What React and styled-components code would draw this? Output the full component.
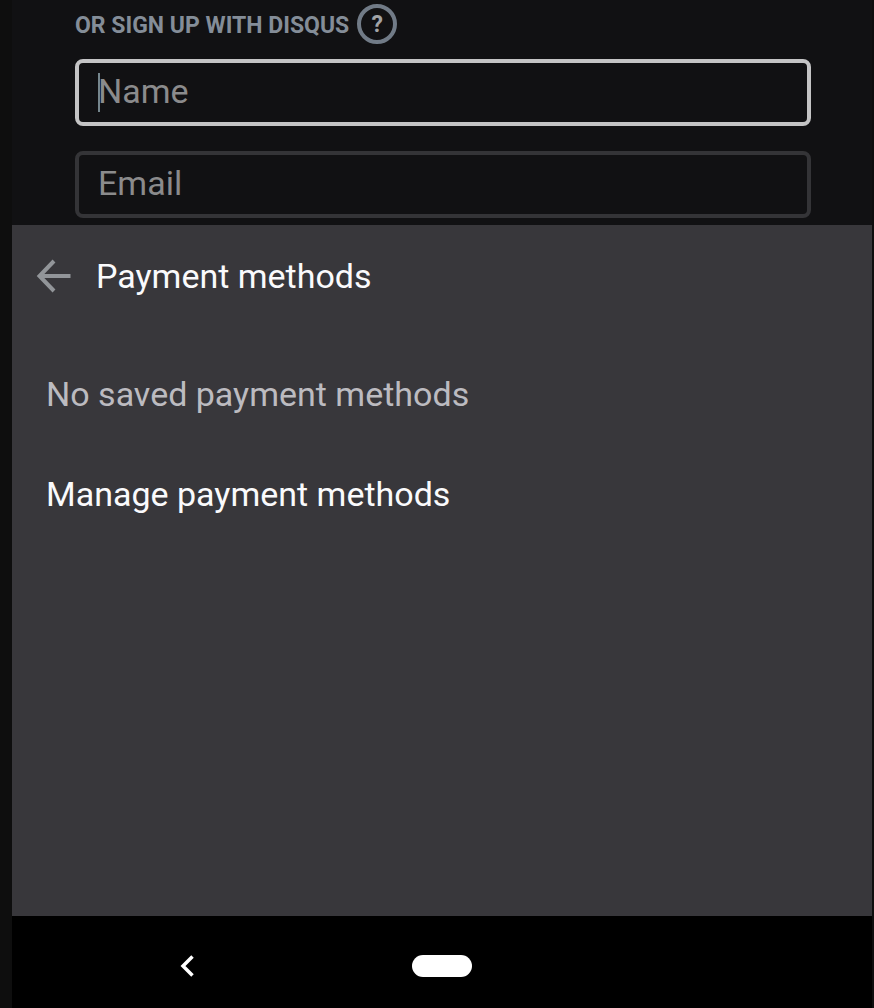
import React from "react";
import styled, { createGlobalStyle } from "styled-components";

const GlobalStyle = createGlobalStyle`
  * {
    box-sizing: border-box;
  }
  body {
    margin: 0;
    background: #0e0e0e;
    font-family: Roboto, "Liberation Sans", sans-serif;
  }
`;

const Button = styled.button`
  border: none;
  padding: 0;
  background: none;
  color: inherit;
  font: inherit;
  cursor: pointer;
`;

const Screen = styled.div`
  min-height: 100vh;
  margin: 0 2px 0 12px;
  display: flex;
  flex-direction: column;
  background: #111113;
`;

const SignUp = styled.form`
  padding: 4px 61px 7px 63px;
`;
const SignUpHeader = styled.div`
  display: flex;
  align-items: center;
  gap: 8px;
  height: 40px;
  margin-bottom: 15px;
`;
const SignUpTitle = styled.h2`
  margin: 0;
  padding-top: 4px;
  color: #848d98;
  font-size: 23px;
  font-weight: 700;
  line-height: 28px;
`;
const HelpButton = styled(Button)`
  width: 40px;
  height: 40px;
  padding-top: 2px;
  border: 4px solid #717b87;
  border-radius: 50%;
  color: #a2a4a7;
  font-size: 23px;
  font-weight: 700;
  line-height: 28px;
`;

const Field = styled.label`
  display: block;
  position: relative;

  & + & {
    margin-top: 25px;
  }
`;
const Input = styled.input`
  display: block;
  width: 100%;
  height: 67px;
  padding: 0 19px 4px;
  border: 4px solid ${(props) => (props.$active ? "#c4c4c5" : "#343437")};
  border-radius: 8px;
  outline: none;
  background: #111113;
  color: #c4c4c5;
  font-family: inherit;
  font-size: 34px;

  &::placeholder {
    color: #8b8b8c;
    opacity: 1;
  }
`;
const Caret = styled.span`
  position: absolute;
  top: 14px;
  left: 23px;
  width: 2px;
  height: 39px;
  background: #75868d;
`;

const Sheet = styled.section`
  flex: 1;
  background: #38373b;
  color: #fafafc;
  font-size: 34px;
  line-height: 40px;
`;
const SheetHeader = styled.header`
  display: flex;
  align-items: center;
  gap: 24px;
  padding: 31px 24px;
  margin-bottom: 17px;
`;
const BackButton = styled(Button)`
  display: flex;
  color: #929599;
`;
const SheetTitle = styled.h1`
  margin: 0;
  font-size: 34px;
  font-weight: 400;
`;
const EmptyText = styled.p`
  margin: 0;
  padding: 30px 34px;
  color: #bcbbc0;
`;
const SheetAction = styled(Button)`
  display: block;
  width: 100%;
  padding: 30px 34px;
  text-align: left;
`;

const NavBar = styled.nav`
  display: grid;
  grid-template-columns: repeat(3, 1fr);
  align-items: center;
  justify-items: center;
  height: 92px;
  padding: 8px 48px 0;
  background: #000;
`;
const NavButton = styled(Button)`
  display: flex;
  color: #fff;
`;
const HomePill = styled(Button)`
  width: 60px;
  height: 22px;
  border-radius: 11px;
  background: #fff;
`;

const App = () => {
  return (
    <>
      <GlobalStyle />
      <Screen>
        <SignUp>
          <SignUpHeader>
            <SignUpTitle>OR SIGN UP WITH DISQUS</SignUpTitle>
            <HelpButton type="button">?</HelpButton>
          </SignUpHeader>
          <Field>
            <Input $active type="text" placeholder="Name" aria-label="Name" />
            <Caret />
          </Field>
          <Field>
            <Input type="email" placeholder="Email" aria-label="Email" />
          </Field>
        </SignUp>

        <Sheet>
          <SheetHeader>
            <BackButton type="button" aria-label="Back">
              <svg width="36" height="36" viewBox="0 0 36 36" fill="none">
                <path
                  d="M34.500 18H4M18 3L3.500 18L18 33"
                  stroke="currentColor"
                  strokeWidth="4"
                />
              </svg>
            </BackButton>
            <SheetTitle>Payment methods</SheetTitle>
          </SheetHeader>
          <EmptyText>No saved payment methods</EmptyText>
          <SheetAction type="button">Manage payment methods</SheetAction>
        </Sheet>

        <NavBar>
          <NavButton type="button" aria-label="Back">
            <svg width="16" height="24" viewBox="0 0 16 24" fill="none">
              <path
                d="M13.500 2.500L4 12L13.500 21.500"
                stroke="currentColor"
                strokeWidth="3.500"
              />
            </svg>
          </NavButton>
          <HomePill type="button" aria-label="Home" />
        </NavBar>
      </Screen>
    </>
  );
};

export default App;
